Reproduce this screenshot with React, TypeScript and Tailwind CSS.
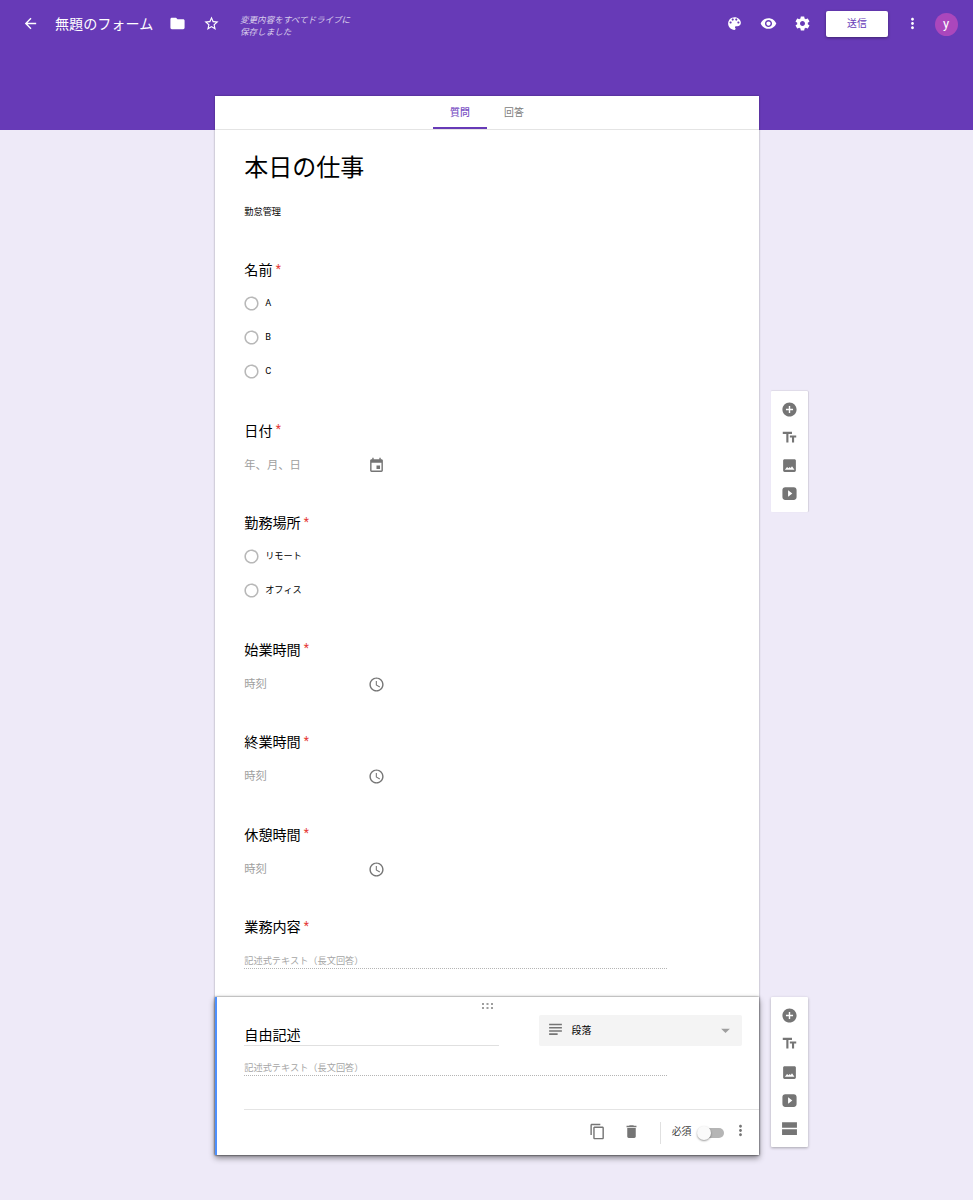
import type { ReactNode } from "react";

const paths = {
  back: "M20 11H7.83l5.59-5.59L12 4l-8 8 8 8 1.41-1.41L7.83 13H20v-2z",
  folder: "M10 4H4c-1.1 0-1.99.9-1.99 2L2 18c0 1.1.9 2 2 2h16c1.1 0 2-.9 2-2V8c0-1.1-.9-2-2-2h-8l-2-2z",
  star: "M22 9.24l-7.19-.62L12 2 9.19 8.63 2 9.24l5.46 4.73L5.82 21 12 17.27 18.18 21l-1.63-7.03L22 9.24zM12 15.4l-3.76 2.27 1-4.28-3.32-2.88 4.38-.38L12 6.1l1.71 4.04 4.38.38-3.32 2.88 1 4.28L12 15.4z",
  palette: "M12 3c-4.97 0-9 4.03-9 9s4.03 9 9 9c.83 0 1.5-.67 1.5-1.5 0-.39-.15-.74-.39-1.01-.23-.26-.38-.61-.38-.99 0-.83.67-1.5 1.5-1.5H16c2.76 0 5-2.24 5-5 0-4.42-4.03-8-9-8zm-5.5 9c-.83 0-1.5-.67-1.5-1.5S5.67 9 6.5 9 8 9.67 8 10.5 7.33 12 6.5 12zm3-4C8.67 8 8 7.33 8 6.5S8.67 5 9.5 5s1.5.67 1.5 1.5S10.33 8 9.5 8zm5 0c-.83 0-1.5-.67-1.5-1.5S13.67 5 14.5 5s1.5.67 1.5 1.5S15.33 8 14.5 8zm3 4c-.83 0-1.5-.67-1.5-1.5S16.67 9 17.5 9s1.5.67 1.5 1.5-.67 1.5-1.5 1.5z",
  eye: "M12 4.5C7 4.5 2.73 7.61 1 12c1.73 4.39 6 7.5 11 7.5s9.27-3.11 11-7.5c-1.73-4.39-6-7.5-11-7.5zM12 17c-2.76 0-5-2.24-5-5s2.24-5 5-5 5 2.24 5 5-2.24 5-5 5zm0-8c-1.66 0-3 1.34-3 3s1.34 3 3 3 3-1.34 3-3-1.34-3-3-3z",
  gear: "M19.43 12.98c.04-.32.07-.64.07-.98s-.03-.66-.07-.98l2.11-1.65c.19-.15.24-.42.12-.64l-2-3.46c-.12-.22-.39-.3-.61-.22l-2.49 1c-.52-.4-1.08-.73-1.69-.98l-.38-2.65C14.46 2.18 14.25 2 14 2h-4c-.25 0-.46.18-.49.42l-.38 2.65c-.61.25-1.17.59-1.69.98l-2.49-1c-.23-.09-.49 0-.61.22l-2 3.46c-.13.22-.07.49.12.64l2.11 1.65c-.04.32-.07.65-.07.98s.03.66.07.98l-2.11 1.65c-.19.15-.24.42-.12.64l2 3.46c.12.22.39.3.61.22l2.49-1c.52.4 1.08.73 1.69.98l.38 2.65c.03.24.24.42.49.42h4c.25 0 .46-.18.49-.42l.38-2.65c.61-.25 1.17-.59 1.69-.98l2.49 1c.23.09.49 0 .61-.22l2-3.46c.12-.22.07-.49-.12-.64l-2.11-1.65zM12 15.5c-1.93 0-3.5-1.57-3.5-3.5s1.57-3.5 3.5-3.5 3.5 1.57 3.5 3.5-1.57 3.5-3.5 3.5z",
  more: "M12 8c1.1 0 2-.9 2-2s-.9-2-2-2-2 .9-2 2 .9 2 2 2zm0 2c-1.1 0-2 .9-2 2s.9 2 2 2 2-.9 2-2-.9-2-2-2zm0 6c-1.1 0-2 .9-2 2s.9 2 2 2 2-.9 2-2-.9-2-2-2z",
  radio: "M12 2C6.48 2 2 6.48 2 12s4.48 10 10 10 10-4.48 10-10S17.52 2 12 2zm0 17.8c-4.3 0-7.8-3.5-7.8-7.8s3.5-7.8 7.8-7.8 7.8 3.5 7.8 7.8-3.5 7.8-7.8 7.8z",
  event: "M17 12h-5v5h5v-5zM16 1v2H8V1H6v2H5c-1.11 0-1.99.9-1.99 2L3 19c0 1.1.89 2 2 2h14c1.1 0 2-.9 2-2V5c0-1.1-.9-2-2-2h-1V1h-2zm3 18H5V8h14v11z",
  clock: "M11.99 2C6.47 2 2 6.48 2 12s4.47 10 9.99 10C17.52 22 22 17.52 22 12S17.52 2 11.99 2zM12 20c-4.42 0-8-3.58-8-8s3.58-8 8-8 8 3.58 8 8-3.58 8-8 8zm.5-13H11v6l5.25 3.15.75-1.23-4.5-2.67z",
  add: "M12 2C6.48 2 2 6.48 2 12s4.48 10 10 10 10-4.48 10-10S17.52 2 12 2zm5 11h-4v4h-2v-4H7v-2h4V7h2v4h4v2z",
  text: "M2.5 4v3h5v12h3V7h5V4h-13zm19 5h-9v3h3v7h3v-7h3V9z",
  image: "M21 19V5c0-1.1-.9-2-2-2H5c-1.1 0-2 .9-2 2v14c0 1.1.9 2 2 2h14c1.1 0 2-.9 2-2zM5.5 18l3-4 2.2 1.8 1.6-1.8 1.5 1.5 1.7-2.5 3.5 5H5.5z",
  video: "M18 3H6C3.5 3 2 4.5 2 7v10c0 2.5 1.5 4 4 4h12c2.5 0 4-1.5 4-4V7c0-2.5-1.5-4-4-4zM10 16.5v-9l6 4.5-6 4.5z",
  section: "M1.5 3h21v8h-21zM1.5 13h21v8h-21z",
  copy: "M16 1H4c-1.1 0-2 .9-2 2v14h2V3h12V1zm3 4H8c-1.1 0-2 .9-2 2v14c0 1.1.9 2 2 2h11c1.1 0 2-.9 2-2V7c0-1.1-.9-2-2-2zm0 16H8V7h11v14z",
  trash: "M6 19c0 1.1.9 2 2 2h8c1.1 0 2-.9 2-2V7H6v12zM19 4h-3.5l-1-1h-5l-1 1H5v2h14V4z",
  paragraph: "M3 2.5h18v2.2H3zM3 7h18v2.2H3zM3 11.5h18v2.2H3zM3 16h12v2.2H3z",
  dropdown: "M5 9l7 7 7-7z",
};

type IconName = keyof typeof paths;

const Icon = ({ name, className = "size-[17px]" }: { name: IconName; className?: string }) => (
  <svg viewBox="0 0 24 24" fill="currentColor" className={`shrink-0 ${className}`}>
    <path d={paths[name]} />
  </svg>
);

const Header = () => {
  return (
    <header className="flex h-[47px] items-center pl-[22px] pr-[15.5px] text-white">
      <Icon name="back" />
      <h1 className="ml-4 w-[99px] whitespace-nowrap pt-px text-[14.1px] leading-5">無題のフォーム</h1>
      <Icon name="folder" className="ml-[15px] size-[17px]" />
      <Icon name="star" className="ml-[17px] size-[17px]" />
      <p className="ml-5 mt-[5px] text-[8.55px] italic leading-[12.5px] text-white/75">
        変更内容をすべてドライブに
        <br />
        保存しました
      </p>
      <div className="ml-auto flex items-center gap-[17px]">
        <Icon name="palette" />
        <Icon name="eye" />
        <Icon name="gear" />
      </div>
      <button className="ml-[15.5px] mt-px h-[26px] w-[62px] rounded-[2px] bg-white pt-px text-[9.9px] text-[#673ab7] shadow-[0_1px_3px_rgba(0,0,0,0.4)]">
        送信
      </button>
      <Icon name="more" className="ml-[15.5px] size-[17px]" />
      <span className="ml-[14px] mt-px flex size-[23px] items-center justify-center rounded-full bg-[#ab47bc] pb-px text-[13px]">
        y
      </span>
    </header>
  );
};

const Question = ({ title, children }: { title: string; children: ReactNode }) => {
  return (
    <section className="pb-[26.5px] pl-[29.3px]">
      <h2 className="flex h-8 items-center text-[14.1px] text-black">
        {title}
        <span className="-mt-[5px] ml-[3.2px] text-[12px] text-[#e53935]">*</span>
      </h2>
      {children}
    </section>
  );
};

const Option = ({ label }: { label: string }) => (
  <div className="flex h-[34px] items-center pb-[2px] text-[9.2px] text-black">
    <Icon name="radio" className="-ml-[1.3px] mr-[5.2px] size-[17px] text-[#b8b8b8]" />
    {label}
  </div>
);

const Picker = ({ label, icon }: { label: string; icon: IconName }) => (
  <div className="flex h-[34px] w-[141.2px] items-center justify-between text-[11.3px] text-[#9e9e9e]">
    <span className="pt-[3px]">{label}</span>
    <Icon name={icon} className="mt-[1px] size-[17px] text-[#757575]" />
  </div>
);

const LongAnswer = () => (
  <div className="h-[17px] w-[423px] border-b border-dotted border-[#b5b5b5] text-[9.2px] leading-[17px] text-[#a6a6a6]">
    記述式テキスト（長文回答）
  </div>
);

const Toolbar = ({ icons, className }: { icons: IconName[]; className: string }) => (
  <div className={`flex w-[37px] flex-col items-center gap-[11.3px] rounded-[1px] bg-white pr-px pt-[10px] text-[#757575] ${className}`}>
    {icons.map((icon) => (
      <Icon key={icon} name={icon} />
    ))}
  </div>
);

const SelectedQuestion = () => {
  return (
    <section className="relative h-[158px] border-l-[2px] border-[#4d90fe] bg-white pl-[27.3px] shadow-[0_0_2px_rgba(0,0,0,0.6),0_3px_6px_rgba(0,0,0,0.45)]">
      <svg viewBox="0 0 11 6" className="absolute left-[264.5px] top-[6px] h-[6px] w-[11px]" fill="#9e9e9e">
        <path d="M0 0h2v2H0zM4.5 0h2v2h-2zM9 0h2v2H9zM0 4h2v2H0zM4.5 4h2v2h-2zM9 4h2v2H9z" />
      </svg>
      <div className="flex justify-between pr-[17px] pt-[18px]">
        <h2 className="h-[31px] w-[254.5px] border-b border-[#e0e0e0] pt-[10px] text-[14.1px] leading-5 text-black">
          自由記述
        </h2>
        <div className="flex h-[31px] w-[203.5px] items-center rounded-[2px] bg-[#f4f4f4] pl-[8px] pr-[9px] text-[9.9px] text-black">
          <Icon name="paragraph" className="mr-[8px] size-[17px] text-[#757575]" />
          <span className="pt-[2px]">段落</span>
          <Icon name="dropdown" className="ml-auto size-[15px] text-[#9e9e9e]" />
        </div>
      </div>
      <div className="pt-[13px]">
        <LongAnswer />
      </div>
      <footer className="mt-[33px] flex h-[45px] items-center border-t border-[#e4e4e4] pr-[10px] text-[#757575]">
        <Icon name="copy" className="ml-auto size-[17px]" />
        <Icon name="trash" className="ml-[17px] size-[17px]" />
        <span className="ml-[20px] mt-[2px] h-[22px] w-px bg-[#e0e0e0]" />
        <span className="ml-[10.5px] pt-[2px] text-[9.9px] text-[#424242]">必須</span>
        <span className="ml-[5.5px] mt-[2px] flex h-[14px] w-[27px] items-center">
          <span className="z-10 size-[14px] rounded-full bg-[#fafafa] shadow-[0_1px_2px_rgba(0,0,0,0.4)]" />
          <span className="-ml-[7px] h-[10px] w-[20px] rounded-full bg-[#b5b5b5]" />
        </span>
        <Icon name="more" className="-mt-[3px] ml-[8px] size-[17px]" />
      </footer>
    </section>
  );
};

const App = () => {
  return (
    <div
      lang="ja"
      className="h-[1200px] w-full overflow-hidden bg-[linear-gradient(#673ab7_130px,#eeeaf8_130px)] font-[Roboto,'Noto_Sans_CJK_JP',sans-serif]"
    >
      <Header />
      <div className="flex items-start pl-[215px] pt-[48.5px]">
        <main className="w-[544px] shrink-0 bg-white shadow-[0_0_2px_rgba(0,0,0,0.35)]">
          <nav className="flex h-[34px] justify-center border-b border-[#e4e4e4] text-[9.9px]">
            <a className="flex w-[54px] items-center justify-center border-b-2 border-[#673ab7] pt-[4px] font-medium text-[#7b52c4]">
              質問
            </a>
            <a className="flex w-[54px] items-center justify-center text-[#808080]">
              <span className="pt-[2px]">回答</span>
            </a>
          </nav>
          <div className="h-[125.5px] pl-[29.3px] pt-[20px] text-black">
            <h1 className="text-[24px] leading-9">本日の仕事</h1>
            <p className="mt-[16px] text-[9.2px] leading-5">勤怠管理</p>
          </div>
          <Question title="名前">
            <Option label="A" />
            <Option label="B" />
            <Option label="C" />
          </Question>
          <Question title="日付">
            <Picker label="年、月、日" icon="event" />
          </Question>
          <Question title="勤務場所">
            <Option label="リモート" />
            <Option label="オフィス" />
          </Question>
          <Question title="始業時間">
            <Picker label="時刻" icon="clock" />
          </Question>
          <Question title="終業時間">
            <Picker label="時刻" icon="clock" />
          </Question>
          <Question title="休憩時間">
            <Picker label="時刻" icon="clock" />
          </Question>
          <Question title="業務内容">
            <div className="pb-[1.5px] pt-[7.5px]">
              <LongAnswer />
            </div>
          </Question>
          <SelectedQuestion />
        </main>
        <aside className="ml-3">
          <Toolbar
            icons={["add", "text", "image", "video"]}
            className="mt-[295px] h-[121.5px] shadow-[0_-1px_1px_rgba(0,0,0,0.06),1px_0_1px_rgba(0,0,0,0.1)]"
          />
          <Toolbar
            icons={["add", "text", "image", "video", "section"]}
            className="mt-[485px] h-[150px] shadow-[0_1px_3px_rgba(0,0,0,0.3)]"
          />
        </aside>
      </div>
    </div>
  );
};

export default App;
